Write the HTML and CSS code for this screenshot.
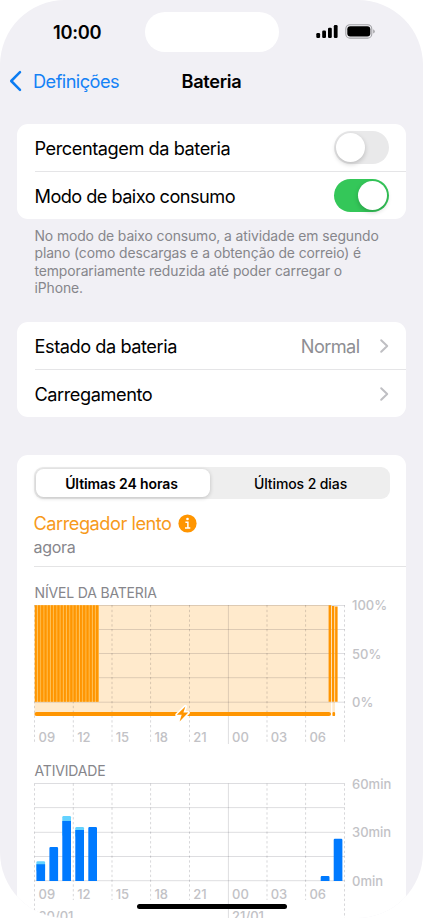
FILE: index.html
```html
<!DOCTYPE html>
<html lang="pt">
<head>
<meta charset="utf-8">
<title>Bateria</title>
<link rel="stylesheet" href="styles.css">
</head>
<body>
<div class="phone">
  <header class="status">
    <span class="time">10:00</span>
    <span class="island"></span>
    <svg class="indicators" width="60" height="16" viewBox="0 0 60 16">
      <rect x=".3" y="9" width="3.8" height="5" rx="1.2"/>
      <rect x="6.2" y="6.5" width="3.8" height="7.5" rx="1.2"/>
      <rect x="12" y="3.7" width="3.8" height="10.3" rx="1.2"/>
      <rect x="17.8" y="1" width="3.8" height="13" rx="1.2"/>
      <rect x="29.8" y=".7" width="26" height="13.4" rx="4.2" fill="none" stroke="#a2a2a6" stroke-width="1.1"/>
      <rect x="31.3" y="2.2" width="23" height="10.4" rx="3"/>
      <path d="M57.2 5.2q1.6.7 1.6 2.2t-1.6 2.2z" fill="#a2a2a6"/>
    </svg>
  </header>
  <nav class="nav">
    <a class="back"><svg width="13" height="22" viewBox="0 0 13 22"><path d="M11 2.2 2.2 11l8.8 8.8"/></svg><span>Definições</span></a>
    <h1>Bateria</h1>
  </nav>
  <main>
    <section class="card">
      <div class="row"><span>Percentagem da bateria</span><span class="switch"></span></div>
      <div class="row"><span class="tight">Modo de baixo consumo</span><span class="switch on"></span></div>
    </section>
    <p class="note">No modo de baixo consumo, a atividade em segundo<br>plano (como descargas e a obtenção de correio) é<br>temporariamente reduzida até poder carregar o<br>iPhone.</p>
    <section class="card links">
      <div class="row"><span>Estado da bateria</span><span class="value">Normal</span><svg class="chev" width="9" height="14" viewBox="0 0 9 14"><path d="m1.2 1.2 6 5.8-6 5.8"/></svg></div>
      <div class="row"><span>Carregamento</span><svg class="chev" width="9" height="14" viewBox="0 0 9 14"><path d="m1.2 1.2 6 5.8-6 5.8"/></svg></div>
    </section>
    <section class="card usage">
      <div class="segments"><span class="seg active">Últimas 24 horas</span><span class="seg other">Últimos 2 dias</span></div>
      <div class="charger">
        <div class="charger-title"><span>Carregador lento</span>
          <svg width="19" height="19" viewBox="0 0 19 19"><circle cx="9.5" cy="9.5" r="9.1" fill="#ff9500"/><circle cx="9.5" cy="5" r="1.3" fill="#fff"/><path d="M7.4 8.2h2.5v5.5M7 13.9h5.3" fill="none" stroke="#fff" stroke-width="1.5"/></svg>
        </div>
        <div class="ago">agora</div>
      </div>
      <h2 class="h-level">NÍVEL DA BATERIA</h2>
      <svg class="chart level" width="372" height="154" viewBox="34 596 372 154">
        <defs>
          <pattern id="bars" x="34.7" y="0" width="3.229" height="10" patternUnits="userSpaceOnUse"><rect width="2.3" height="10" fill="#ff9500"/></pattern>
        </defs>
        <path d="M34.5 605H331v107H34.5z" fill="#ff9500" opacity=".2"/>
        <path d="M332.3 702h2.7v10h-2.7z" fill="#ff9500" opacity=".2"/>
        <path class="grid" d="M34.5 605.5h310M34.5 629.5h310M34.5 653.5h310M34.5 677.7h310M34.5 702.2h310M228.4 605v139"/>
        <path class="dash" d="M34.5 605v139M73.3 605v139M112 605v139M150.6 605v139M189.5 605v139M267 605v139M305.6 605v139M344.5 605v139"/>
        <path d="M34.7 605.2h64.2v96.6H34.7z" fill="#ffc35c"/>
        <path d="M34.7 605.2h64.2v96.6H34.7z" fill="url(#bars)"/>
        <path d="M328.6 605.2h2.6v96.6h-2.6zM331.9 606h2.5v95.8h-2.5zM335.1 606.4h2.5v95.4h-2.5z" fill="#ff9500"/>
        <path d="M36.5 714H329" stroke="#ff9500" stroke-width="4.2" stroke-linecap="round"/>
        <rect x="332.4" y="711.9" width="2.7" height="4.2" rx="1.2" fill="#ff9500"/>
        <path d="m185.4 706.4-8.6 8.4h4.9l-2.1 6.7 8.7-8.9h-4.9z" fill="#ff9500" stroke="#fff" stroke-width="3.2" stroke-linejoin="round" paint-order="stroke"/>
        <g class="hours"><text x="38.5" y="741.8">09</text><text x="77.2" y="741.8">12</text><text x="115.7" y="741.8">15</text><text x="154.4" y="741.8">18</text><text x="193.3" y="741.8">21</text><text x="232" y="741.8">00</text><text x="270.7" y="741.8">03</text><text x="309.4" y="741.8">06</text></g>
        <g class="scale"><text x="352" y="610.3">100%</text><text x="352" y="658.7">50%</text><text x="352" y="707.2">0%</text></g>
      </svg>
      <h2 class="h-activity">ATIVIDADE</h2>
      <svg class="chart activity" width="372" height="150" viewBox="34 774 372 150">
        <path class="grid" d="M34.5 783.5h310M34.5 807.6h310M34.5 832.3h310M34.5 856.5h310M34.5 880.7h310M228.4 783.5V918"/>
        <path class="dash" d="M34.5 783.5V911M73.3 783.5V900M112 783.5V900M150.6 783.5V900M189.5 783.5V900M267 783.5V900M305.6 783.5V900M344.5 783.5V918"/>
        <g fill="#64d2ff"><rect x="36.4" y="861.2" width="8.7" height="10" rx="1.2"/><rect x="62.3" y="816" width="8.7" height="20" rx="1.2"/><rect x="75.3" y="827" width="8.7" height="10" rx="1.2"/></g>
        <path fill="#007aff" d="M36.4 864.2h8.7v16.7h-8.7zM62.3 821h8.7v59.9h-8.7zM75.3 830h8.7v50.9h-8.7zM49.4 880.9v-32.7q0-1.2 1.2-1.2h6.3q1.2 0 1.2 1.2v32.7zM88.3 880.9v-52.7q0-1.2 1.2-1.2h6.3q1.2 0 1.2 1.2v52.7zM320.7 880.9v-3.6q0-1.2 1.2-1.2h6.4q1.2 0 1.2 1.2v3.6zM333.7 880.9v-41q0-1.2 1.2-1.2h6.3q1.2 0 1.2 1.2v41z"/>
        <g class="hours"><text x="38.5" y="898.8">09</text><text x="77.2" y="898.8">12</text><text x="115.7" y="898.8">15</text><text x="154.4" y="898.8">18</text><text x="193.3" y="898.8">21</text><text x="232" y="898.8">00</text><text x="270.7" y="898.8">03</text><text x="309.4" y="898.8">06</text><text x="38.5" y="920.8">20/01</text><text x="232" y="920.8">21/01</text></g>
        <g class="scale"><text x="352" y="788.5">60min</text><text x="352" y="837.2">30min</text><text x="352" y="885.6">0min</text></g>
      </svg>
    </section>
  </main>
  <div class="home"></div>
</div>
</body>
</html>
```
FILE: styles.css
```css
* { box-sizing: border-box; }
body { margin: 0; background: #fff; font-family: Inter, "Liberation Sans", sans-serif; color: #000; }
svg { display: block; flex: none; overflow: visible; }
.phone { position: relative; width: 422.5px; height: 918px; overflow: hidden; background: #f1f0f5; border-radius: 65px 65px 66px 66px; }
.status { display: grid; grid-template-columns: 144.5px 134px 1fr; height: 62px; padding-top: 12px; }
.time { padding-left: 53px; font-size: 18.3px; line-height: 40px; font-weight: 600; letter-spacing: -.3px; }
.island { height: 40px; border-radius: 20px; background: #fff; }
.indicators { margin: 12px 0 0 37.5px; }
.nav { display: grid; grid-template-columns: 171.5px 80px 1fr; align-items: center; height: 38px; }
.back { display: flex; align-items: center; gap: 11px; padding-left: 9px; color: #1582f5; font-size: 18.2px; letter-spacing: -.55px; }
.back path { fill: none; stroke: #0b7cf2; stroke-width: 2.5; stroke-linecap: round; stroke-linejoin: round; }
h1 { margin: 0; font-size: 18.2px; font-weight: 600; text-align: center; letter-spacing: -.3px; }
main { padding: 24px 16.5px 0 17px; }
.card { background: #fff; border-radius: 11px; }
.row { display: flex; align-items: center; height: 48px; margin-left: 17.5px; padding-right: 17.5px; font-size: 18.2px; letter-spacing: -.45px; white-space: nowrap; }
.row:first-child { height: 47px; padding-top: 1px; }
.row + .row { border-top: 1px solid #e5e5e7; }
.tight { letter-spacing: -.55px; }
.switch { width: 55px; height: 33px; margin: -1px 0 0 auto; padding: 2px; border-radius: 17px; background: #e9e9ea; }
.switch::before { content: ""; display: block; width: 29px; height: 29px; border-radius: 50%; background: #fff; box-shadow: 0 2px 5px #0003; }
.switch.on { background: #34c759; }
.switch.on::before { margin-left: 22px; }
.note { height: 69px; margin: 9px 0 25px 17.5px; color: #86868b; font-size: 13.9px; line-height: 17.25px; letter-spacing: -.1px; white-space: nowrap; }
.value { margin-left: auto; margin-right: 20px; color: #8e8e93; letter-spacing: -.6px; }
.chev { margin-left: auto; }
.value + .chev { margin-left: 0; }
.chev path { fill: none; stroke: #bfbfc3; stroke-width: 2; stroke-linecap: round; stroke-linejoin: round; }
.usage { height: 480px; margin-top: 38px; padding-top: 12px; }
.segments { display: flex; width: 356px; height: 32px; margin-left: 16.5px; padding: 2px; border-radius: 9px; background: #eee; }
.seg { flex: 1; display: grid; place-items: center; font-size: 14px; font-weight: 500; letter-spacing: -.1px; }
.seg.active { flex: none; width: 174px; padding-right: 2px; border-radius: 7.5px; background: #fff; font-weight: 600; box-shadow: 0 1px 4px #0003; }
.seg.other { padding-left: 4px; }
.charger { height: 68px; margin-left: 16.5px; padding-top: 12px; border-bottom: 1px solid #e4e4e5; }
.charger-title { display: flex; align-items: center; gap: 6px; height: 24px; font-size: 18.2px; color: #f79a1b; letter-spacing: -.47px; }
.ago { height: 24px; line-height: 24px; font-size: 16px; color: #86868b; letter-spacing: -.3px; }
h2 { margin: 0 0 0 17.5px; font-size: 14px; line-height: 18px; font-weight: 400; color: #86868b; letter-spacing: -.17px; }
.h-level { margin-top: 17px; }
.h-activity { margin-top: 12px; }
.chart { margin-left: 17px; }
.level { margin-top: -6px; }
.activity { margin-top: -6px; }
.grid { fill: none; stroke: #00001422; }
.dash { fill: none; stroke: #00001428; stroke-dasharray: 2.4 2.4; }
.hours, .scale { fill: #c2c2c6; font-size: 13px; font-weight: 500; }
.home { position: absolute; left: 136.5px; top: 904px; width: 150.5px; height: 5.3px; border-radius: 3px; background: #000; }
```
